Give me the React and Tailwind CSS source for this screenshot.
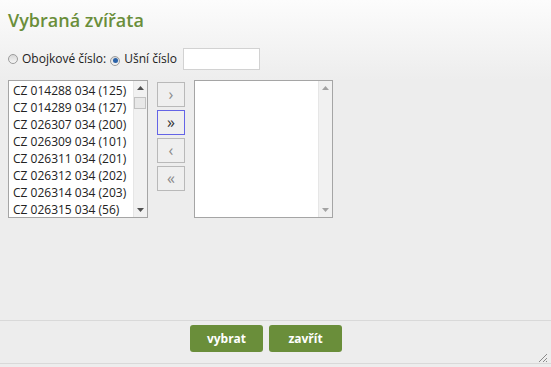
import React from 'react';

const animals = [
    'CZ 014288 034 (125)',
    'CZ 014289 034 (127)',
    'CZ 026307 034 (200)',
    'CZ 026309 034 (101)',
    'CZ 026311 034 (201)',
    'CZ 026312 034 (202)',
    'CZ 026314 034 (203)',
    'CZ 026315 034 (56)',
];

const Radio = ({ checked }) => (
    <span className="relative inline-flex h-[10px] w-[10px] shrink-0 items-center justify-center rounded-full border border-[#9c9c9c] bg-gradient-to-b from-[#d8d8d8] to-[#f6f6f6]">
        {checked && <span className="h-[5px] w-[5px] rounded-full bg-[#2b62a8]" />}
    </span>
);

const Scrollbar = ({ disabled }) => (
    <div className="flex w-[14px] flex-col items-center justify-between border-l border-[#e6e6e6] bg-[#f1f1f1] py-[5px]">
        <svg width="7" height="4" viewBox="0 0 7 4">
            <path d="M0 4 L3.5 0 L7 4 Z" fill={disabled ? '#a3a3a3' : '#505050'} />
        </svg>
        {!disabled && (
            <div className="absolute top-[16px] right-[1px] h-[12px] w-[12px] border border-[#c2c2c2] bg-[#e8e8e8]" />
        )}
        <svg width="7" height="4" viewBox="0 0 7 4">
            <path d="M0 0 L3.5 4 L7 0 Z" fill={disabled ? '#a3a3a3' : '#505050'} />
        </svg>
    </div>
);

const MoveButton = ({ label, focused }) => (
    <button
        className={`flex h-[25px] w-[28px] items-center justify-center border bg-[#efefef] pb-[2px] text-[16px] leading-none ${
            focused ? 'border-[#6464e6] text-[#333]' : 'border-[#b9b9b9] text-[#8a8a8a]'
        }`}
    >
        {label}
    </button>
);

export default function App() {
    return (
        <div className="relative flex h-[367px] w-[551px] flex-col overflow-hidden bg-[#ededed] font-['Open_Sans',sans-serif] text-[#222]">
            <div className="bg-gradient-to-b from-[#fcfcfc] to-[#ededed] pb-[10px]">
                <h1 className="px-2 pt-2 text-[18px] leading-6 font-semibold text-[#6a8e3a]">
                    Vybraná zvířata
                </h1>
                <div className="mt-4 flex h-[22px] items-center pl-2 text-[12px]">
                    <Radio />
                    <span className="ml-[4px]">Obojkové číslo:</span>
                    <span className="ml-[4px]">
                        <Radio checked />
                    </span>
                    <span className="ml-[4px]">Ušní číslo</span>
                    <input
                        type="text"
                        className="ml-[6px] h-[22px] w-[77px] border border-[#d2d2d2] bg-white outline-none"
                    />
                </div>
            </div>

            <div className="flex items-start px-2">
                <div className="relative flex h-[138px] w-[140px] border border-[#a5a5a5] bg-white">
                    <ul className="flex-1 overflow-hidden pt-[1px] pl-[4px] text-[12px] leading-[17px] whitespace-nowrap">
                        {animals.map((a) => (
                            <li key={a}>{a}</li>
                        ))}
                    </ul>
                    <Scrollbar />
                </div>

                <div className="mt-[2px] ml-[9px] flex flex-col gap-[3px]">
                    <MoveButton label="›" />
                    <MoveButton label="»" focused />
                    <MoveButton label="‹" />
                    <MoveButton label="«" />
                </div>

                <div className="relative ml-[9px] flex h-[138px] w-[139px] border border-[#a5a5a5] bg-white">
                    <div className="flex-1" />
                    <Scrollbar disabled />
                </div>
            </div>

            <div className="mt-auto mb-[3px] flex h-[44px] items-start justify-center gap-[6px] border-t border-b border-[#d9d9d9] pt-[4px] pr-[19px]">
                <button className="h-[27px] w-[73px] rounded-[3px] bg-[#6a8e3a] text-[12px] font-bold text-white">
                    vybrat
                </button>
                <button className="h-[27px] w-[73px] rounded-[3px] bg-[#6a8e3a] text-[12px] font-bold text-white">
                    zavřít
                </button>
            </div>

            <svg
                className="absolute right-[3px] bottom-[4px]"
                width="11"
                height="11"
                viewBox="0 0 11 11"
            >
                <path d="M10 2 L2 10 M10 6 L6 10 M10 9 L9 10" stroke="#8a8a8a" strokeWidth="1" />
            </svg>
        </div>
    );
}
